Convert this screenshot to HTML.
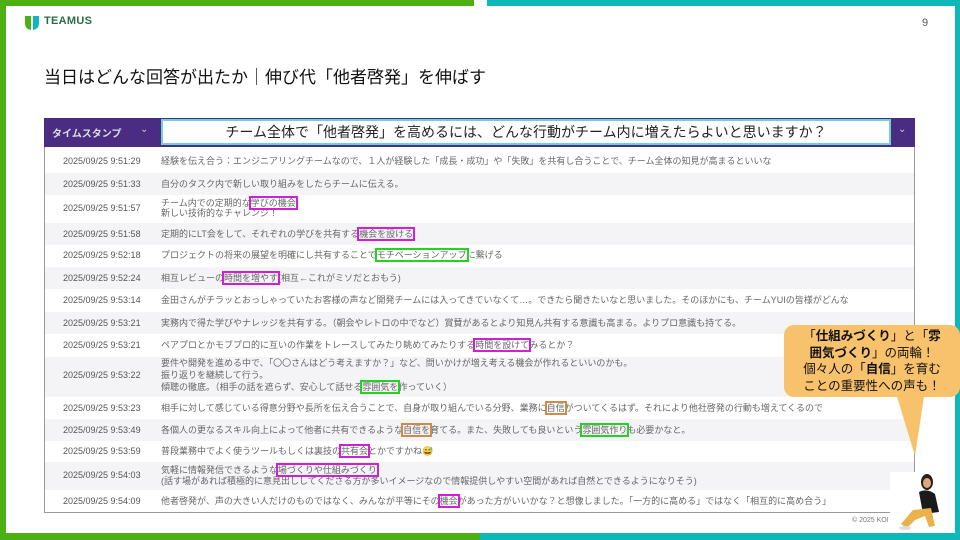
<!DOCTYPE html>
<html><head><meta charset="utf-8"><style>
*{margin:0;padding:0;box-sizing:border-box}
body{width:960px;height:540px;position:relative;overflow:hidden;background:#fff;font-family:"Liberation Sans","Noto Sans CJK JP",sans-serif}
.a{position:absolute}
.row{position:absolute;left:45px;width:870px;font-size:9px;color:#666;line-height:11px}
.row .t{position:absolute;left:18px;color:#555}
.row .c{position:absolute;left:116px;white-space:nowrap}
.m{outline:2px solid #d21fd6;outline-offset:0}
.g{outline:2px solid #22d322}
.o{outline:2px solid #d28a4a}
</style></head><body>
<div class="a" style="left:0;top:0;width:474px;height:6px;background:#4caf12"></div>
<div class="a" style="left:0;top:0;width:6px;height:540px;background:#4caf12"></div>
<div class="a" style="left:0;top:533px;width:480px;height:7px;background:#4caf12"></div>
<div class="a" style="left:487px;top:0;width:473px;height:6px;background:#0cb8b8"></div>
<div class="a" style="left:955px;top:0;width:5px;height:540px;background:#0cb8b8"></div>
<div class="a" style="left:480px;top:533px;width:480px;height:7px;background:#0cb8b8"></div>

<svg class="a" style="left:24px;top:14px" width="16" height="18" viewBox="0 0 16 18"><path d="M1 2 H7 V16 Q1 15 1 9Z" fill="#4caf12"/><path d="M9 2 H15 V9 Q15 15 9 16Z" fill="#0cb8b8"/></svg>
<div class="a" style="left:44px;top:15px;font-size:11px;font-weight:bold;color:#2b6b4a;letter-spacing:.3px">TEAMUS</div>
<div class="a" style="left:922px;top:17px;font-size:11px;color:#555">9</div>
<div class="a" style="left:44px;top:63px;font-size:17px;color:#111">当日はどんな回答が出たか｜伸び代「他者啓発」を伸ばす</div>

<div class="a" style="left:44px;top:118px;width:871px;height:29px;background:#4a2d82"></div>
<div class="a" style="left:52px;top:125px;font-size:10px;color:#ddd;font-weight:bold">タイムスタンプ</div>
<div class="a" style="left:140px;top:124px;font-size:10px;color:#ccc">⌄</div>
<div class="a" style="left:161px;top:119px;width:730px;height:26px;background:#fff;border:2px solid #6fd0d6;text-align:center;font-size:14px;line-height:22px;color:#222">チーム全体で「他者啓発」を高めるには、どんな行動がチーム内に増えたらよいと思いますか？</div>
<div class="a" style="left:898px;top:124px;font-size:10px;color:#ccc">⌄</div>
<div class="a" style="left:44px;top:147px;width:871px;height:366px;border-left:1px solid #999;border-right:1px solid #999;border-bottom:1px solid #999"></div>

<div class="a" style="left:45px;top:173px;width:869px;height:22px;background:#f4f4f6"></div>
<div class="a" style="left:45px;top:223px;width:869px;height:22px;background:#f4f4f6"></div>
<div class="a" style="left:45px;top:267px;width:869px;height:22px;background:#f4f4f6"></div>
<div class="a" style="left:45px;top:312px;width:869px;height:22px;background:#f4f4f6"></div>
<div class="a" style="left:45px;top:357px;width:869px;height:40px;background:#f4f4f6"></div>
<div class="a" style="left:45px;top:419px;width:869px;height:22px;background:#f4f4f6"></div>
<div class="a" style="left:45px;top:462px;width:869px;height:28px;background:#f4f4f6"></div>

<div class="row" style="top:156px"><span class="t">2025/09/25 9:51:29</span><span class="c">経験を伝え合う：エンジニアリングチームなので、１人が経験した「成長・成功」や「失敗」を共有し合うことで、チーム全体の知見が高まるといいな</span></div>
<div class="row" style="top:179px"><span class="t">2025/09/25 9:51:33</span><span class="c">自分のタスク内で新しい取り組みをしたらチームに伝える。</span></div>
<div class="row" style="top:198px;line-height:10px"><span class="t" style="top:5px">2025/09/25 9:51:57</span><span class="c">チーム内での定期的な<span class="m">学びの機会</span><br>新しい技術的なチャレンジ！</span></div>
<div class="row" style="top:229px"><span class="t">2025/09/25 9:51:58</span><span class="c">定期的にLT会をして、それぞれの学びを共有する<span class="m">機会を設ける</span></span></div>
<div class="row" style="top:250px"><span class="t">2025/09/25 9:52:18</span><span class="c">プロジェクトの将来の展望を明確にし共有することで<span class="g">モチベーションアップ</span>に繋げる</span></div>
<div class="row" style="top:273px"><span class="t">2025/09/25 9:52:24</span><span class="c">相互レビューの<span class="m">時間を増やす</span>(相互←これがミソだとおもう)</span></div>
<div class="row" style="top:295px"><span class="t">2025/09/25 9:53:14</span><span class="c">金田さんがチラッとおっしゃっていたお客様の声など開発チームには入ってきていなくて…。できたら聞きたいなと思いました。そのほかにも、チームYUIの皆様がどんな</span></div>
<div class="row" style="top:318px"><span class="t">2025/09/25 9:53:21</span><span class="c">実務内で得た学びやナレッジを共有する。（朝会やレトロの中でなど）賞賛があるとより知見ん共有する意識も高まる。よりプロ意識も持てる。</span></div>
<div class="row" style="top:340px"><span class="t">2025/09/25 9:53:21</span><span class="c">ペアプロとかモブプロ的に互いの作業をトレースしてみたり眺めてみたりする<span class="m">時間を設けて</span>みるとか？</span></div>
<div class="row" style="top:357px;line-height:12px"><span class="t" style="top:12px">2025/09/25 9:53:22</span><span class="c">要件や開発を進める中で、「〇〇さんはどう考えますか？」など、問いかけが増え考える機会が作れるといいのかも。<br>振り返りを継続して行う。<br>傾聴の徹底。（相手の話を遮らず、安心して話せる<span class="g">雰囲気を</span>作っていく）</span></div>
<div class="row" style="top:403px"><span class="t">2025/09/25 9:53:23</span><span class="c">相手に対して感じている得意分野や長所を伝え合うことで、自身が取り組んでいる分野、業務に<span class="o">自信</span>がついてくるはず。それにより他社啓発の行動も増えてくるので</span></div>
<div class="row" style="top:425px"><span class="t">2025/09/25 9:53:49</span><span class="c">各個人の更なるスキル向上によって他者に共有できるような<span class="o">自信を</span>育てる。また、失敗しても良いという<span class="g">雰囲気作り</span>も必要かなと。</span></div>
<div class="row" style="top:446px"><span class="t">2025/09/25 9:53:59</span><span class="c">普段業務中でよく使うツールもしくは裏技の<span class="m">共有会</span>とかですかね😅</span></div>
<div class="row" style="top:465px"><span class="t" style="top:5px">2025/09/25 9:54:03</span><span class="c">気軽に情報発信できるような<span class="m">場づくりや仕組みづくり</span><br>(話す場があれば積極的に意見出ししてくださる方が多いイメージなので情報提供しやすい空間があれば自然とできるようになりそう)</span></div>
<div class="row" style="top:496px"><span class="t">2025/09/25 9:54:09</span><span class="c">他者啓発が、声の大きい人だけのものではなく、みんなが平等にその<span class="m">機会</span>があった方がいいかな？と想像しました。「一方的に高める」ではなく「相互的に高め合う」</span></div>
<div class="a" style="left:852px;top:517px;font-size:7px;color:#777">© 2025 KOI</div>

<svg class="a" style="left:880px;top:390px" width="60" height="70"><polygon points="15,0 45,0 35,66" fill="#f7c26b"/></svg>
<div class="a" style="left:784px;top:325px;width:176px;height:72px;background:#f7c26b;border-radius:10px;text-align:center;font-size:12.5px;line-height:16.5px;color:#111;padding-top:3px">「<b>仕組みづくり</b>」と「<b>雰<br>囲気づくり</b>」の両輪！<br>個々人の「<b>自信</b>」を育む<br>ことの重要性への声も！</div>

<div class="a" style="left:890px;top:472px;width:65px;height:60px;background:#fff"></div>
<svg class="a" style="left:895px;top:472px" width="55" height="60" viewBox="0 0 55 60">
<ellipse cx="32" cy="10" rx="6" ry="8" fill="#222"/>
<ellipse cx="32" cy="11" rx="4" ry="5" fill="#e0a77a"/>
<path d="M24 20 Q32 16 40 22 L44 40 L28 42Z" fill="#1a1a1a"/>
<path d="M18 38 L36 36 L40 54 L34 55 L30 44 L20 48 L12 56 L6 52Z" fill="#e9b24a"/>
<ellipse cx="10" cy="56" rx="6" ry="2" fill="#ddd"/>
</svg>
</body></html>
